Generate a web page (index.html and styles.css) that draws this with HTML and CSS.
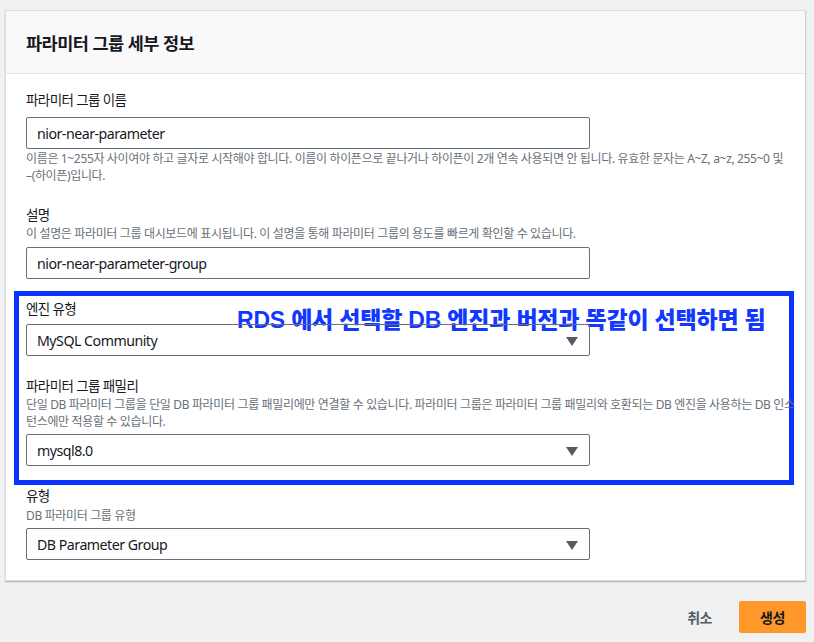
FILE: index.html
```html
<!DOCTYPE html>
<html lang="ko">
<head>
<meta charset="utf-8">
<title>파라미터 그룹 세부 정보</title>
<link rel="stylesheet" href="styles.css">
</head>
<body>
<div class="page">
  <section class="card">
    <header class="card-header"><h2 class="card-title">파라미터 그룹 세부 정보</h2></header>
    <div class="card-body">
      <div class="field f-name">
        <div class="label">파라미터 그룹 이름</div>
        <div class="input">nior-near-parameter</div>
        <div class="help help-after">이름은 1~255자 사이여야 하고 글자로 시작해야 합니다. 이름이 하이픈으로 끝나거나 하이픈이 2개 연속 사용되면 안 됩니다. 유효한 문자는 A~Z, a~z, 255~0 및<br>–(하이픈)입니다.</div>
      </div>
      <div class="field f-desc">
        <div class="label">설명</div>
        <div class="help">이 설명은 파라미터 그룹 대시보드에 표시됩니다. 이 설명을 통해 파라미터 그룹의 용도를 빠르게 확인할 수 있습니다.</div>
        <div class="input">nior-near-parameter-group</div>
      </div>
      <div class="highlight">
        <div class="note">RDS 에서 선택할 DB 엔진과 버전과 똑같이 선택하면 됨</div>
        <div class="field f-engine">
          <div class="label">엔진 유형</div>
          <div class="input select">MySQL Community<span class="caret"></span></div>
        </div>
        <div class="field f-family">
          <div class="label">파라미터 그룹 패밀리</div>
          <div class="help">단일 DB 파라미터 그룹을 단일 DB 파라미터 그룹 패밀리에만 연결할 수 있습니다. 파라미터 그룹은 파라미터 그룹 패밀리와 호환되는 DB 엔진을 사용하는 DB 인스<br>턴스에만 적용할 수 있습니다.</div>
          <div class="input select">mysql8.0<span class="caret"></span></div>
        </div>
      </div>
      <div class="field f-type">
        <div class="label">유형</div>
        <div class="help">DB 파라미터 그룹 유형</div>
        <div class="input select">DB Parameter Group<span class="caret"></span></div>
      </div>
    </div>
  </section>
  <div class="actions">
    <button class="btn btn-link">취소</button>
    <button class="btn btn-primary">생성</button>
  </div>
</div>
</body>
</html>
```

FILE: styles.css
```css
* { box-sizing: border-box; }
html, body { margin: 0; padding: 0; }
body {
  background: #f0f1f1;
  font-family: "Noto Sans", "Noto Sans CJK KR", sans-serif;
  color: #16191f;
  width: 814px;
  height: 642px;
  overflow: hidden;
}
.page { padding: 10px 8px 0 5px; }
.card {
  background: #fff;
  border: 1px solid #dcdede;
  border-right-color: #cfd1d1;
  box-shadow: 0 1px 1px rgba(0,28,36,0.25);
  width: 801px;
}
.card-header {
  background: #f9f9f9;
  border-bottom: 1px solid #e3e4e4;
  height: 63px;
  padding: 0 20px;
  display: flex;
  align-items: center;
}
.card-title {
  margin: 0;
  font-size: 17.5px;
  font-weight: 700;
  letter-spacing: -0.5px;
  color: #16191f;
  line-height: 24px;
  padding-top: 2px;
}
.card-body { padding: 16px 20px 20px 20px; }
.field { display: flex; flex-direction: column; }
.label {
  font-size: 13.5px;
  line-height: 20px;
  letter-spacing: -0.6px;
  color: #16191f;
}
.help {
  font-size: 12px;
  line-height: 17px;
  letter-spacing: -0.35px;
  color: #687078;
  white-space: nowrap;
}
.input {
  position: relative;
  width: 564px;
  height: 32px;
  border: 1px solid #687078;
  border-radius: 2px;
  padding: 0 10px;
  display: flex;
  align-items: center;
  font-size: 14.2px;
  letter-spacing: -0.5px;
  color: #16191f;
  background: transparent;
}
.f-name .input { margin-top: 7px; }
.help-after { margin-top: 1px; }
.f-desc { margin-top: 21px; }
.f-desc .help { margin-top: 0; }
.f-desc .input { margin-top: 5px; }
.caret {
  position: absolute;
  right: 11px;
  top: 12px;
  width: 0; height: 0;
  border-left: 6px solid transparent;
  border-right: 6px solid transparent;
  border-top: 9px solid #545b64;
}
.highlight {
  position: relative;
  margin: 12px -9px 0 -12px;
  border: 5px solid #0a32ff;
  padding: 3px 0 14px 7px;
}
.note {
  position: absolute;
  left: 218px;
  top: 10px;
  font-family: "Liberation Sans", "Noto Sans CJK KR", sans-serif;
  font-size: 23px;
  font-weight: 800;
  color: #1238ff;
  letter-spacing: -0.2px;
  line-height: 28px;
  white-space: nowrap;
}
.f-engine .input { margin-top: 5px; }
.f-family { margin-top: 20px; }
.f-family .input { margin-top: 4px; }
.f-type { margin-top: 1px; }
.f-type .help { margin-top: 1px; }
.f-type .input { margin-top: 4px; }
.actions {
  display: flex;
  justify-content: flex-end;
  align-items: center;
  margin-top: 20px;
  gap: 27px;
}
.btn {
  font-family: "Noto Sans CJK KR", sans-serif;
  font-size: 14px;
  font-weight: 700;
  border: none;
  cursor: pointer;
  letter-spacing: -0.5px;
}
.btn-link { background: transparent; color: #545b64; padding: 0; }
.btn-primary {
  background: #ff9828;
  color: #16191f;
  width: 67px;
  height: 32px;
  border-radius: 2px;
}
```
